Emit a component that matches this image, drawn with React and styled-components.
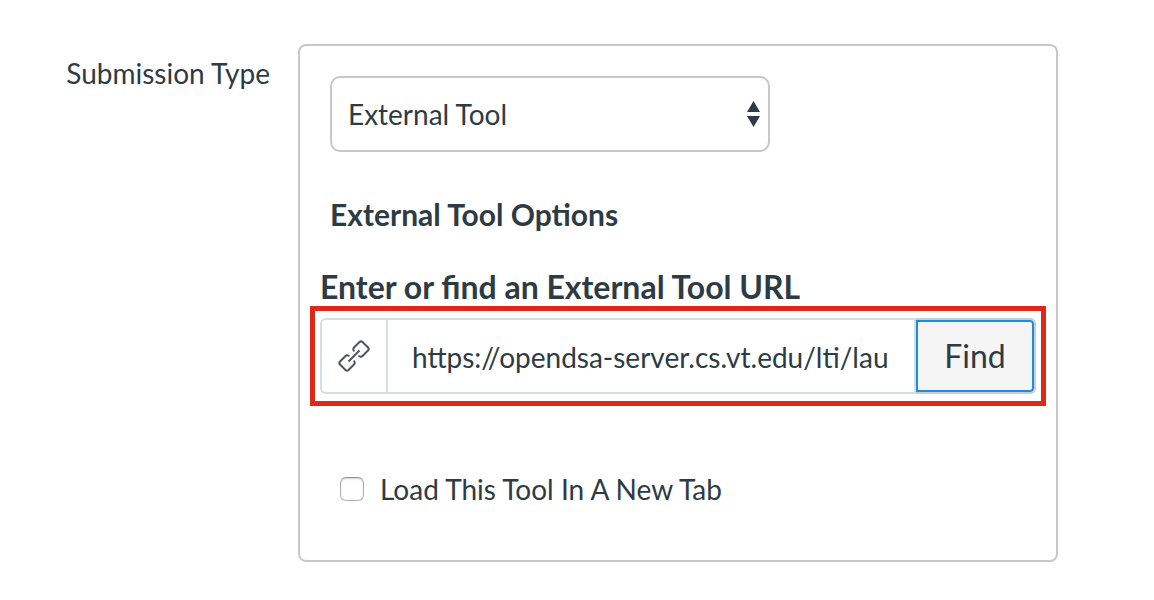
import React from "react";
import styled, { createGlobalStyle } from "styled-components";

const Global = createGlobalStyle`
  *, *::before, *::after { box-sizing: border-box; }
  body {
    margin: 0;
    background: #fff;
    color: #2d3b45;
    font-family: Lato, "Liberation Sans", sans-serif;
    font-size: 28px;
    line-height: 36px;
  }
  input, select, button { font: inherit; color: inherit; }
`;

const Form = styled.form`
  display: flex;
  align-items: flex-start;
  padding: 44px 96px 38px 0;
`;

const FieldLabel = styled.label`
  flex: 0 0 298px;
  padding: 11px 28px 0 0;
  text-align: right;
`;

const Panel = styled.div`
  flex: 1;
  min-width: 0;
  padding: 30px 10px 53px;
  border: 2px solid #c8c8c8;
  border-radius: 8px;
`;

const SelectBox = styled.div`
  display: grid;
  align-items: center;
  width: 440px;
  max-width: 100%;
  margin-left: 20px;
  > * { grid-area: 1 / 1; }
`;

const Select = styled.select`
  appearance: none;
  width: 100%;
  height: 76px;
  padding: 0 40px 0 16px;
  border: 2px solid #c8c8c8;
  border-radius: 10px;
  background: #fff;
`;

const Arrows = styled.svg`
  justify-self: end;
  margin-right: 10px;
  pointer-events: none;
`;

const SectionTitle = styled.h2`
  margin: 44px 0 0 20px;
  font-size: 30px;
  line-height: 36px;
`;

const UrlLabel = styled.label`
  display: block;
  margin: 36px 0 0 10px;
  font-size: 32px;
  line-height: 38px;
  font-weight: 700;
`;

const Highlight = styled.div`
  border: 5px solid #e12717;
  padding: 7px 5px;
`;

const UrlGroup = styled.div`
  display: flex;
  height: 76px;
`;

const IconCell = styled.span`
  display: grid;
  place-items: center;
  flex: 0 0 66px;
  border: 2px solid #d7dee3;
  border-right: 0;
  border-radius: 6px 0 0 6px;
`;

const UrlInput = styled.input`
  flex: 1;
  min-width: 0;
  padding: 2px 24px 0;
  border: 2px solid #d7dee3;
  border-right: 0;
  outline: none;
`;

const FindButton = styled.button`
  flex: 0 0 122px;
  padding: 0;
  border: 2px solid #c7cdd1;
  border-left-color: #d7dee3;
  border-radius: 0 6px 6px 0;
  background: #f5f5f5;
  box-shadow: inset 0 0 0 2px #1a8fe0;
  font-size: 32px;
`;

const CheckRow = styled.label`
  display: flex;
  align-items: center;
  gap: 16px;
  margin: 65px 0 0 30px;
`;

const Checkbox = styled.input`
  appearance: none;
  width: 24px;
  height: 24px;
  margin: 0;
  border: 1px solid #b0b0b0;
  border-top-color: #969696;
  border-radius: 6px;
  background: #fff;
  box-shadow: inset 0 1px 2px #d0d0d0;
`;

export default function App() {
  return (
    <>
      <Global />
      <Form onSubmit={(e) => e.preventDefault()}>
        <FieldLabel htmlFor="type">Submission Type</FieldLabel>
        <Panel>
          <SelectBox>
            <Select id="type"><option>External Tool</option></Select>
            <Arrows width="13" height="26" viewBox="0 0 13 26" fill="#2d3b45" aria-hidden="true">
              <path d="M6.500 0l6.500 11H0zM6.500 26l6.500-11H0z" />
            </Arrows>
          </SelectBox>
          <SectionTitle>External Tool Options</SectionTitle>
          <UrlLabel htmlFor="url">Enter or find an External Tool URL</UrlLabel>
          <Highlight>
            <UrlGroup>
              <IconCell>
                <svg width="32" height="32" viewBox="0 0 32 32" fill="none" stroke="#4a565f" strokeWidth="2" strokeLinejoin="round" aria-hidden="true">
                  <path d="M16 11.500L15.400 9.700Q15 8.500 16 7.500L21.500 2Q23 .7 24.500 2L30 7.500Q31.500 9 30 10.500L24.500 16Q23.500 17 22.300 16.600L20.500 16" />
                  <path d="M16 20.500L16.600 22.300Q17 23.500 16 24.500L10.500 30Q9 31.300 7.500 30L2 24.500Q.5 23 2 21.500L7.500 16Q8.500 15 9.700 15.400L11.500 16" />
                  <path d="M10.500 21.500L21.500 10.500" />
                </svg>
              </IconCell>
              <UrlInput id="url" type="text" defaultValue="https://opendsa-server.cs.vt.edu/lti/launch" />
              <FindButton type="button">Find</FindButton>
            </UrlGroup>
          </Highlight>
          <CheckRow>
            <Checkbox type="checkbox" />
            Load This Tool In A New Tab
          </CheckRow>
        </Panel>
      </Form>
    </>
  );
}
